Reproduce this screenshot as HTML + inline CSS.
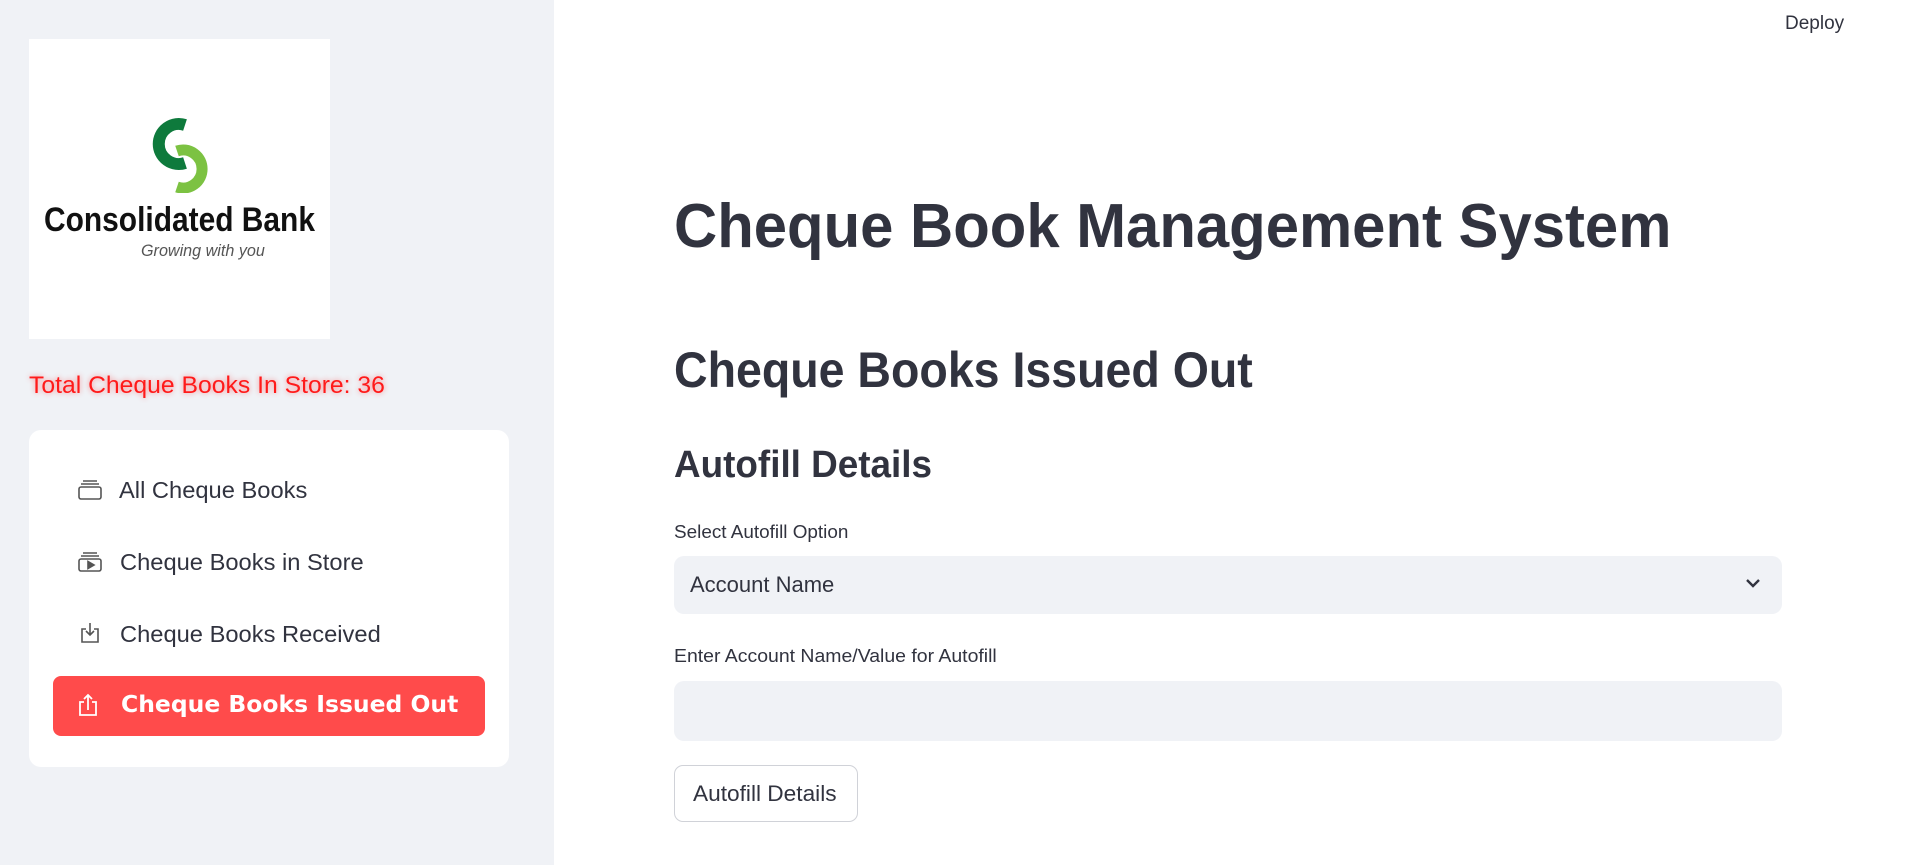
<!DOCTYPE html>
<html><head><meta charset="utf-8"><style>
*{margin:0;padding:0;box-sizing:border-box}
body{width:1913px;height:865px;overflow:hidden;background:#fff;font-family:"Liberation Sans",sans-serif;color:#31333f;position:relative}
.side{position:absolute;left:0;top:0;width:554px;height:865px;background:#f0f2f6}
.abs{position:absolute;white-space:nowrap}
.sx{display:inline-block;transform-origin:0 50%}
.logo{position:absolute;left:29px;top:39px;width:301px;height:300px;background:#fff}
.card{position:absolute;left:29px;top:430px;width:480px;height:337px;background:#fff;border-radius:12px}
.item{position:absolute;left:50px;font-size:23px;color:#31333f}
.btnred{position:absolute;left:53px;top:676px;width:432px;height:60px;background:#ff4b4b;border-radius:8px}
.box{position:absolute;left:674px;width:1108px;background:#f0f2f6;border-radius:10px}
</style></head><body>
<div class="side"></div>
<div class="logo">
<svg class="abs" style="left:118px;top:76px" width="72" height="78" viewBox="0 0 72 78">
<path d="M38 10 A20 20 0 1 0 38 48" fill="none" stroke="#0e7a3c" stroke-width="12"/>
<path d="M30 36 A19 19 0 1 1 30 72" fill="none" stroke="#7cc242" stroke-width="11"/>
</svg>
<div class="abs" style="left:15px;top:162px;font-size:34px;font-weight:bold;color:#111"><span class="sx" style="transform:scaleX(0.88)">Consolidated Bank</span></div>
<div class="abs" style="left:112px;top:202px;font-size:17px;font-style:italic;color:#555"><span class="sx" style="transform:scaleX(0.95)">Growing with you</span></div>
</div>
<div class="abs" style="left:29px;top:372px;font-size:24px;color:#ff1a1a;text-shadow:0 0 6px rgba(255,0,0,.45)"><span class="sx" style="transform:scaleX(1.03)">Total Cheque Books In Store: 36</span></div>
<div class="card">
<svg class="abs" style="left:48px;top:49px" width="26" height="22" viewBox="0 0 26 22" fill="none" stroke="#555" stroke-width="1.6"><rect x="2" y="8" width="22" height="12" rx="2"/><path d="M4 5h18M6 2h14"/></svg>
<div class="item" style="left:90px;top:47px"><span class="sx" style="transform:scaleX(1.03)">All Cheque Books</span></div>
<svg class="abs" style="left:48px;top:121px" width="26" height="22" viewBox="0 0 26 22" fill="none" stroke="#555" stroke-width="1.6"><rect x="2" y="8" width="22" height="12" rx="2"/><path d="M4 5h18M6 2h14"/><path d="M11 10.5v7l6-3.5z" fill="#555"/></svg>
<div class="item" style="left:91px;top:119px"><span class="sx" style="transform:scaleX(1.03)">Cheque Books in Store</span></div>
<svg class="abs" style="left:50px;top:191px" width="22" height="24" viewBox="0 0 22 24" fill="none" stroke="#555" stroke-width="1.6"><path d="M7 8H3v13h16V8h-4M11 2v12M7 10l4 4 4-4"/></svg>
<div class="item" style="left:91px;top:191px"><span class="sx" style="transform:scaleX(1.03)">Cheque Books Received</span></div>
</div>
<div class="btnred">
<svg class="abs" style="left:24px;top:16px" width="22" height="26" viewBox="0 0 22 26" fill="none" stroke="#fff" stroke-width="1.8"><path d="M7 10H3v13h16V10h-4M11 18V3M7 7l4-4 4 4"/></svg>
<div class="abs" style="left:68px;top:16px;font-size:23px;font-weight:900;color:#fff;font-family:'DejaVu Sans','Liberation Sans',sans-serif"><span class="sx" style="transform:scaleX(1.02)">Cheque Books Issued Out</span></div>
</div>
<div class="abs" style="left:1785px;top:13px;font-size:19px;color:#31333f"><span class="sx" style="transform:scaleX(1.0)">Deploy</span></div>
<div class="abs" style="left:674px;top:192px;font-size:62px;font-weight:bold;line-height:70px"><span class="sx" style="transform:scaleX(0.965)">Cheque Book Management System</span></div>
<div class="abs" style="left:674px;top:343px;font-size:50px;font-weight:600;line-height:54px"><span class="sx" style="transform:scaleX(0.93)">Cheque Books Issued Out</span></div>
<div class="abs" style="left:674px;top:445px;font-size:38px;font-weight:600;line-height:40px"><span class="sx" style="transform:scaleX(0.97)">Autofill Details</span></div>
<div class="abs" style="left:674px;top:522px;font-size:18px;line-height:20px"><span class="sx" style="transform:scaleX(1.05)">Select Autofill Option</span></div>
<div class="box" style="top:556px;height:58px"></div>
<div class="abs" style="left:690px;top:573px;font-size:22px;line-height:24px"><span class="sx" style="transform:scaleX(1.0)">Account Name</span></div>
<svg class="abs" style="left:1745px;top:577px" width="16" height="12" viewBox="0 0 16 12" fill="none" stroke="#31333f" stroke-width="2.4"><path d="M2 3l6 6 6-6"/></svg>
<div class="abs" style="left:674px;top:646px;font-size:18px;line-height:20px"><span class="sx" style="transform:scaleX(1.08)">Enter Account Name/Value for Autofill</span></div>
<div class="box" style="top:681px;height:60px"></div>
<div class="abs" style="left:674px;top:765px;width:184px;height:57px;border:1px solid #d0d2d8;border-radius:9px;background:#fff"></div>
<div class="abs" style="left:693px;top:782px;font-size:22px;line-height:24px"><span class="sx" style="transform:scaleX(1.03)">Autofill Details</span></div>
</body></html>
